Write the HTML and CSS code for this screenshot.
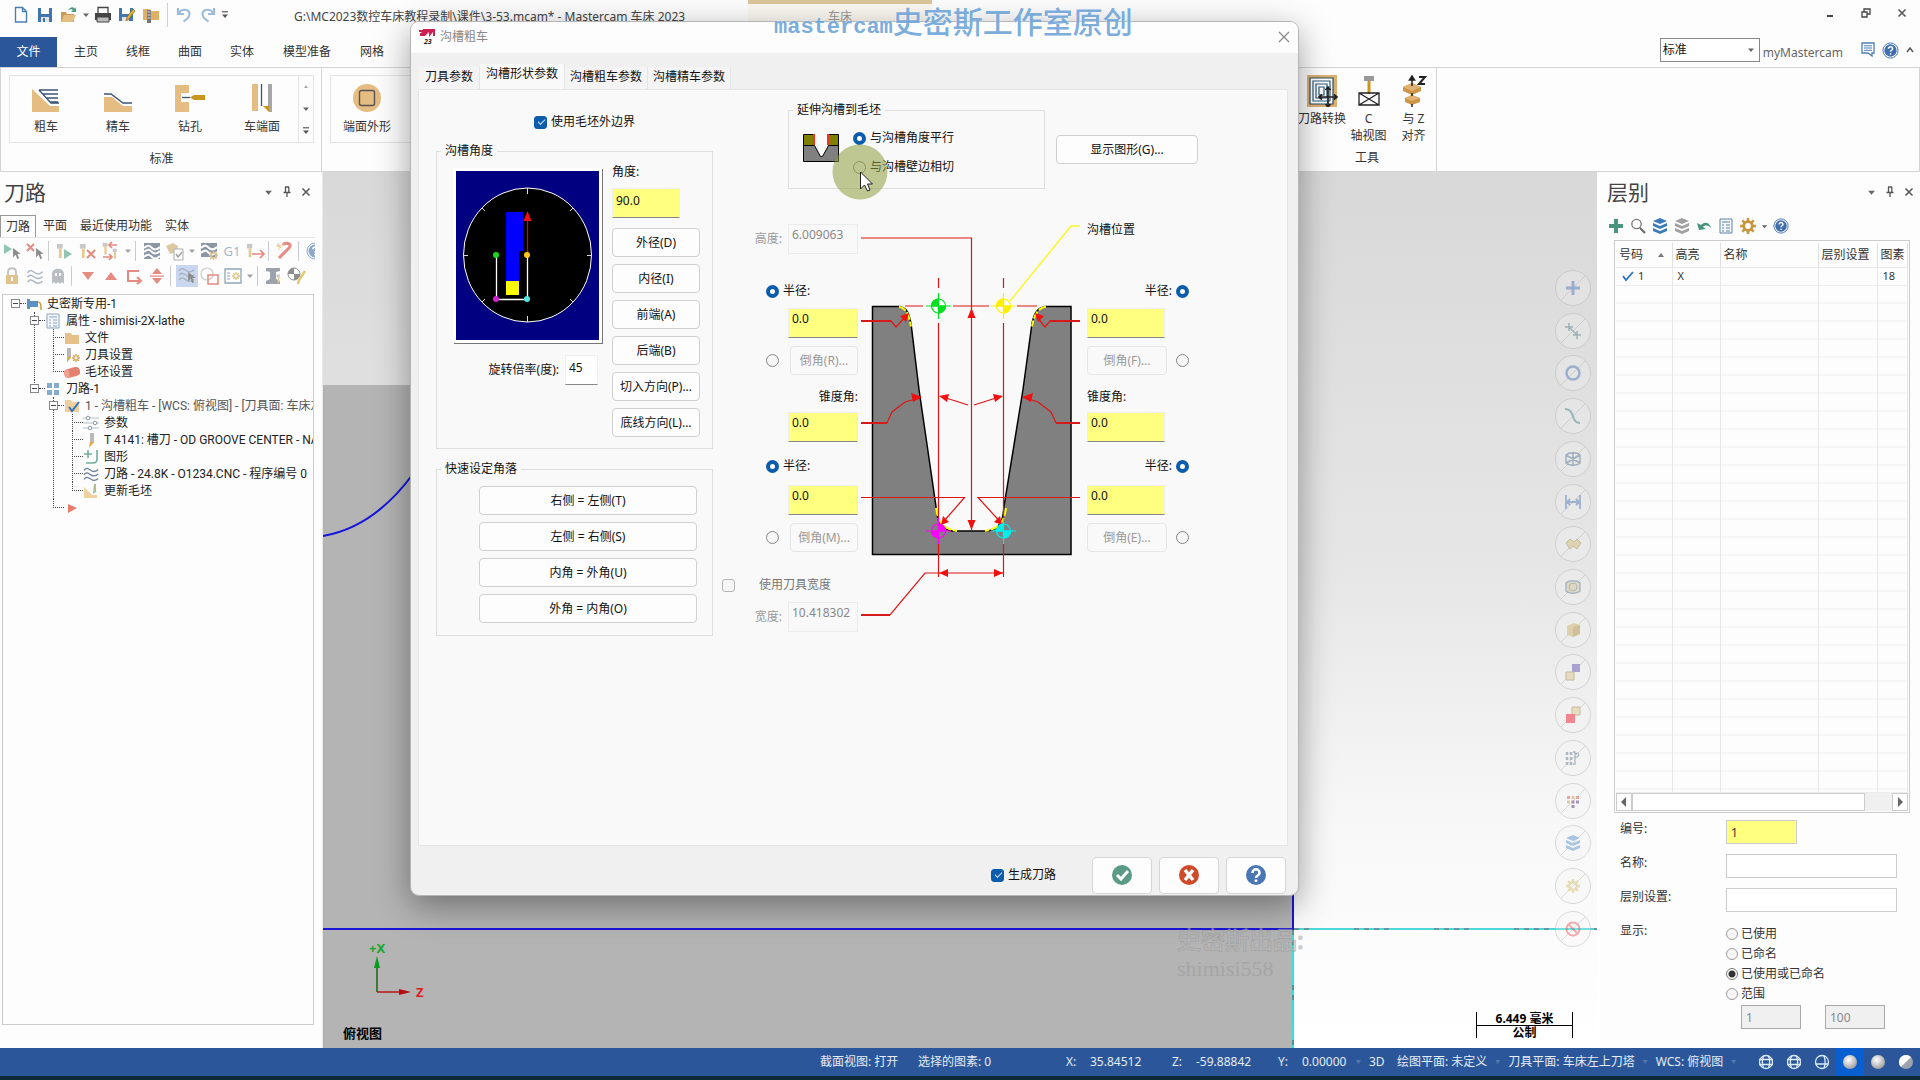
FILE: index.html
```html
<!DOCTYPE html>
<html lang="zh-CN">
<head>
<meta charset="utf-8">
<title>Mastercam 车床 2023</title>
<link rel="stylesheet" href="styles.css">
</head>
<body>
<svg class="defs" aria-hidden="true">
  <symbol id="help" viewBox="0 0 18 18"><circle cx="9" cy="9" r="8" fill="#fff" stroke="#3f6fae" stroke-width="1"/><circle cx="9" cy="9" r="6.500" fill="#3f6fae"/><path d="M6.800 7.200c0-3 4.600-2.800 4.400 0 0 1.500-2.200 1.600-2.200 3.200M9 12v1.600" fill="none" stroke="#fff" stroke-width="1.600"/></symbol>
  <symbol id="layers" viewBox="0 0 16 16"><path d="M8 0l7 3-7 3-7-3zM1 5l7 3 7-3v3l-7 3-7-3zM1 10l7 3 7-3v3l-7 3-7-3z" fill="currentColor"/></symbol>
  <symbol id="gear" viewBox="0 0 16 16"><circle cx="8" cy="8" r="4.300" fill="none" stroke="currentColor" stroke-width="2.800"/><path d="M8 0v3M8 13v3M0 8h3M13 8h3M2.300 2.300l2 2M11.700 11.700l2 2M13.700 2.300l-2 2M4.300 11.700l-2 2" stroke="currentColor" stroke-width="2.600"/></symbol>
  <symbol id="caret" viewBox="0 0 8 8"><path d="M1 2.500h6L4 6z" fill="#666"/></symbol>
  <symbol id="more" viewBox="0 0 8 8"><path d="M1 .8h6" stroke="#555" stroke-width="1.200"/><path d="M1 3.500h6L4 7z" fill="#555"/></symbol>
  <symbol id="pin" viewBox="0 0 10 12"><path d="M3 1h4M3.500 1v5M6.800 1v5M1.500 6.500h7M5 7v4" stroke="#555" stroke-width="1.300" fill="none"/></symbol>
  <symbol id="cross" viewBox="0 0 10 10"><path d="M1.500 1.500l7 7M8.500 1.500l-7 7" stroke="#555" stroke-width="1.500"/></symbol>
  <symbol id="waves" viewBox="0 0 18 16"><path d="M1 4c3-4 5-2 8 0s5 2 8-1M1 9c3-4 5-2 8 0s5 2 8-1M1 14c3-4 5-2 8 0s5 2 8-1" fill="none" stroke="currentColor" stroke-width="1.400"/></symbol>
  <symbol id="tool" viewBox="0 0 18 18"><path d="M1 1h6v5H1z" fill="#a5a5a5"/><path d="M3 6h3v10H3z" fill="#d9ad4c"/></symbol>
  <symbol id="arrowptr" viewBox="0 0 10 14"><path d="M1 0v11l3-3 2 5 2-1-2-5h4z" fill="#444"/></symbol>
  <symbol id="globe" viewBox="0 0 16 16"><g fill="none" stroke="#dcebfb" stroke-width="1.300"><circle cx="8" cy="8" r="6.500"/><path d="M1 5.500h14M1 10.500h14M5.500 2c-1.500 4-1.500 8 0 12M10.500 2c1.500 4 1.500 8 0 12"/></g></symbol>
  <radialGradient id="ball" cx=".4" cy=".35" r=".7"><stop offset="0" stop-color="#fff"/><stop offset="1" stop-color="#9b9b9b"/></radialGradient>
</svg>

<header class="titlebar">
  <div class="quick">
    <button class="ib" title="新建"><svg width="16" height="18" viewBox="0 0 16 18"><path d="M2.500 1.500h7l4 4v10.500h-11zM9.500 1.500v4h4" fill="#fff" stroke="#4a7fb5" stroke-width="1.400"/></svg></button>
    <button class="ib" title="保存"><svg width="16" height="16" viewBox="0 0 16 16"><path d="M1 1h14v14H1z" fill="#3f76b0"/><path d="M4 1h8v6H4z" fill="#fff"/><path d="M4 10h8v5H4z" fill="#e4e4e4"/><path d="M6 11h2v4H6z" fill="#3f76b0"/></svg></button>
    <button class="ib" title="打开"><svg width="18" height="18" viewBox="0 0 18 18"><path d="M1 6h5l1 2h7v8H1z" fill="#c99a55"/><path d="M1 16l3-7h12l-3 7z" fill="#e6bd80"/><path d="M8 4c3-4 6-3 7-1l1-2v5h-5l2-2c-1-1-3-1-5 0z" fill="#4b9b80"/></svg></button>
    <svg class="caret" width="8" height="8"><use href="#caret"/></svg>
    <button class="ib" title="打印"><svg width="18" height="18" viewBox="0 0 18 18"><path d="M4 1.500h10V8H4z" fill="#fff" stroke="#444" stroke-width="1.300"/><path d="M1 7h16v7H1z" fill="#444"/><path d="M3 11h12v5H3z" fill="#bbb" stroke="#444"/></svg></button>
    <button class="ib" title="另存为"><svg width="18" height="18" viewBox="0 0 18 18"><path d="M1 2h14v13H1z" fill="#3f76b0"/><path d="M4 2h8v6H4z" fill="#fff"/><path d="M4 11h7v4H4z" fill="#e4e4e4"/><path d="M8 15l1-4 6-8 2 2-6 8z" fill="#e2b031" stroke="#705a20" stroke-width=".6"/></svg></button>
    <button class="ib" title="打包"><svg width="18" height="18" viewBox="0 0 18 18"><path d="M1 3h6l2 2h8v9H1z" fill="#e0b069"/><path d="M5 4h4v13H5z" fill="#777"/><path d="M5.500 6h3M5.500 9h3M5.500 12h3" stroke="#ddd"/></svg></button>
    <span class="vsep"></span>
    <button class="ib" title="撤销"><svg width="16" height="16" viewBox="0 0 16 16"><path d="M2 1v6h6M2.500 6.500c3-5 10-5 11 0 .5 4-3 6-6 8" fill="none" stroke="#9dbbdc" stroke-width="2.200"/></svg></button>
    <button class="ib" title="重做"><svg width="16" height="16" viewBox="0 0 16 16"><path d="M14 1v6H8M13.500 6.500c-3-5-10-5-11 0-.5 4 3 6 6 8" fill="none" stroke="#9dbbdc" stroke-width="2.200"/></svg></button>
    <svg class="caret" width="8" height="8"><use href="#more"/></svg>
  </div>
  <span class="doc">G:\MC2023数控车床教程录制\课件\3-53.mcam* - Mastercam 车床 2023</span>
  <span class="context">车床</span>
  <div class="wincontrols">
    <button title="最小化"><svg width="12" height="12" viewBox="0 0 12 12"><path d="M3 9h6" stroke="#444" stroke-width="2"/></svg></button>
    <button title="还原"><svg width="10" height="10" viewBox="0 0 10 10"><path d="M1 4h5v5H1zM3 4V1h6v5H6" fill="none" stroke="#444" stroke-width="1.300"/></svg></button>
    <button title="关闭"><svg width="10" height="10"><use href="#cross"/></svg></button>
  </div>
</header>

<nav class="menubar">
  <a class="file" href="#">文件</a><a href="#">主页</a><a href="#">线框</a><a href="#">曲面</a><a href="#">实体</a><a class="wide" href="#">模型准备</a><a href="#">网格</a>
  <div class="menuright">
    <span class="combo"><select aria-label="配置"><option>标准</option></select><svg width="8" height="8"><use href="#caret"/></svg></span>
    <a class="my" href="#">myMastercam</a>
    <svg width="14" height="16" viewBox="0 0 14 16"><path d="M1 1h12v10h-2v3l-4-3H1z" fill="#fff" stroke="#4a7fb5" stroke-width="1.300"/><path d="M3 3.800h8M3 6h8M3 8.300h8" stroke="#4a7fb5"/></svg>
    <svg width="17" height="17"><use href="#help"/></svg>
    <svg width="8" height="8" viewBox="0 0 8 8"><path d="M1 6l3-4 3 4" fill="none" stroke="#555" stroke-width="1.500"/></svg>
  </div>
</nav>

<section class="ribbon">
  <div class="rgroup">
    <div class="gallery">
      <button class="big"><svg width="30" height="30" viewBox="0 0 30 30"><path d="M1 6l18 17h9v6H1z" fill="#e5bd82"/><path d="M8 7h19M12 11h15M16 15h11M19 19h8M8 7l12 13h8" stroke="#3d5475" stroke-width="1.300" fill="none"/></svg>粗车</button>
      <button class="big"><svg width="30" height="30" viewBox="0 0 30 30"><path d="M1 14h8l11 9h9v6H1z" fill="#e5bd82"/><path d="M1 11h7l12 9h9" stroke="#3d5475" stroke-width="1.300" fill="none"/></svg>精车</button>
      <button class="big"><svg width="32" height="30" viewBox="0 0 32 30"><path d="M1 2h14v8H7v9h8v10H1z" fill="#e5bd82"/><path d="M8 14.500h8" stroke="#3d5475" stroke-width="1.300"/><path d="M16 14.500l4-2.500h11v5H20z" fill="#c8961e"/></svg>钻孔</button>
      <button class="big"><svg width="24" height="30" viewBox="0 0 24 30"><path d="M2 1h6v27H2z" fill="#e5bd82"/><path d="M11.500 1v22" stroke="#3d5475" stroke-width="1.300"/><path d="M18 1h4v28h-3l-1-4z" fill="#a7a7a7"/><path d="M13 23h6v6z" fill="#c8961e"/></svg>车端面</button>
      <div class="gscroll"><svg width="8" height="8" viewBox="0 0 8 8"><path d="M2 5h4L4 2z" fill="#aaa"/></svg><svg width="8" height="8"><use href="#caret"/></svg><svg width="8" height="8"><use href="#more"/></svg></div>
    </div>
    <span class="rname">标准</span>
  </div>
  <div class="rgroup crowd">
    <div class="gallery">
      <button class="big"><svg width="30" height="30" viewBox="0 0 30 30"><circle cx="15" cy="15" r="14" fill="#e5bd82"/><rect x="7.500" y="7.500" width="15" height="15" rx="2" fill="none" stroke="#555" stroke-width="1.400"/></svg>端面外形</button>
    </div>
  </div>
  <div class="rgroup tools">
    <div class="toolrow">
      <button class="big"><svg width="32" height="32" viewBox="0 0 32 32"><path d="M1 0h30v32H1z" fill="#dcb06f"/><path d="M4 3h23v26H4z" fill="#fff" stroke="#2c4a66" stroke-width="1.200"/><path d="M7 6h17v20H7zM10 9h11v14H10zM13 12h5v8h-5z" fill="none" stroke="#2c5a78" stroke-width="1.200"/><path d="M22 12v20M13 22h18M19.500 15l2.500-3 2.500 3M19.500 29l2.500 3 2.500-3M16 19.500L13 22l3 2.500M28 19.500l3 2.500-3 2.500" stroke="#222" stroke-width="1.700" fill="none"/></svg>刀路转换</button>
      <button class="big"><svg width="24" height="32" viewBox="0 0 24 32"><path d="M7 1h10v5H7z" fill="#999"/><path d="M10.500 6h3v13h-3z" fill="#c8961e"/><path d="M2 18h20v12H2zM2 18l20 12M22 18L2 30" fill="none" stroke="#222" stroke-width="1.300"/></svg>C<br>轴视图</button>
      <button class="big"><svg width="26" height="32" viewBox="0 0 26 32"><path d="M2 12l9-4 9 4v4l-9 4-9-4zM4 23l7-3 8 3v4l-8 3-7-3z" fill="#cf9546"/><path d="M2 12l9-4 9 4-9 4zM4 23l7-3 8 3-8 3z" fill="#e0b374"/><path d="M11 2v9M11 18v3M11 29v3M8.500 5L11 1l2.500 4z" stroke="#222" stroke-width="1.500"/><path d="M18 2h6l-6 7h6" fill="none" stroke="#222" stroke-width="2"/></svg>与 Z<br>对齐</button>
    </div>
    <span class="rname">工具</span>
  </div>
</section>

<main class="workspace">
  <aside class="paths">
    <div class="phead"><h2>刀路</h2><span class="pbtns"><svg width="9" height="9"><use href="#caret"/></svg><svg width="10" height="12"><use href="#pin"/></svg><svg width="10" height="10"><use href="#cross"/></svg></span></div>
    <nav class="ptabs"><a class="on" href="#">刀路</a><a href="#">平面</a><a href="#">最近使用功能</a><a href="#">实体</a></nav>
    <div class="tbar">
      <svg class="ti" viewBox="0 0 22 22"><path d="M3 4l8 5-8 5z" fill="#4c9f84"/><use href="#arrowptr" x="11" y="8" width="9" height="12"/></svg>
      <svg class="ti" viewBox="0 0 22 22"><path d="M3 4l7 7M10 4l-7 7" stroke="#d6402f" stroke-width="2"/><use href="#arrowptr" x="11" y="8" width="9" height="12"/></svg>
      <i class="ts"></i>
      <svg class="ti" viewBox="0 0 22 22"><use href="#tool" x="2" y="3" width="17" height="17"/><path d="M10 9l8 5-8 5z" fill="#4c9f84"/></svg>
      <svg class="ti" viewBox="0 0 22 22"><use href="#tool" x="2" y="3" width="17" height="17"/><path d="M10 10l8 8M18 10l-8 8" stroke="#d6402f" stroke-width="2"/></svg>
      <svg class="ti" viewBox="0 0 22 22"><use href="#tool" x="2" y="2" width="14" height="14"/><use href="#tool" x="12" y="8" width="12" height="12"/><path d="M9 5h8M12 2L9 5l3 3M3 17h9M9 14l3 3-3 3" stroke="#d6402f" stroke-width="1.700" fill="none"/></svg>
      <svg class="tc" viewBox="0 0 8 8"><use href="#caret"/></svg>
      <i class="ts"></i>
      <svg class="ti" viewBox="0 0 22 22"><path d="M3 3h16v16H3z" fill="#40556f"/><path d="M3 8c4-4 6-2 8 0s5 2 8-1M3 12c4-4 6-2 8 0s5 2 8-1M3 17c4-4 6-2 8 0s5 2 8-1" stroke="#fff" stroke-width="2" fill="none"/></svg>
      <svg class="ti" viewBox="0 0 22 22"><path d="M2 6l7-3 5 3-1 6-7 2z" fill="#c9a763"/><path d="M10 9h9v11h-9z" fill="#fff" stroke="#777"/><path d="M12 14l2 3 4-5" stroke="#666" fill="none" stroke-width="1.500"/></svg>
      <svg class="tc" viewBox="0 0 8 8"><use href="#caret"/></svg>
      <svg class="ti" viewBox="0 0 22 22"><path d="M3 3h16v14H3z" fill="#40556f"/><path d="M3 8c4-4 6-2 8 0s5 2 8-1M3 13c4-4 6-2 8 0s5 2 8-1" stroke="#fff" stroke-width="2.200" fill="none"/><g color="#d09b42"><use href="#gear" x="11" y="11" width="9" height="9"/></g></svg>
      <span class="ti g1">G1</span>
      <svg class="ti" viewBox="0 0 22 22"><use href="#tool" x="2" y="3" width="16" height="16"/><path d="M8 14h11M16 10l4 4-4 4" stroke="#d6402f" stroke-width="1.700" fill="none"/></svg>
      <i class="ts"></i>
      <svg class="ti" viewBox="0 0 22 22"><path d="M5 18L15 8c4-5-4-6-6-3" stroke="#d6402f" stroke-width="3" fill="none"/><path d="M5 3v7M2 6h7M3 4l4 4" stroke="#d9ad4c"/></svg>
      <i class="ts"></i>
      <svg class="ti" viewBox="0 0 22 22"><use href="#help" x="2" y="2" width="18" height="18"/></svg>
    </div>
    <div class="tbar">
      <svg class="ti" viewBox="0 0 22 22"><path d="M7 10V7c0-5 8-5 8 0v3" fill="none" stroke="#999" stroke-width="1.800"/><path d="M5 10h12v9H5z" fill="#d09b42"/><path d="M11 12v4" stroke="#fff" stroke-width="2"/></svg>
      <svg class="ti slate" viewBox="0 0 22 22"><use href="#waves" x="2" y="4" width="18" height="15"/></svg>
      <svg class="ti" viewBox="0 0 22 22"><path d="M5 19V9c0-7 12-7 12 0v10l-2-2-2 2-2-2-2 2-2-2z" fill="#8f949c"/><path d="M8 8h2v3H8zM12 8h2v3h-2z" fill="#fff"/></svg>
      <i class="ts"></i>
      <svg class="ti" viewBox="0 0 22 22"><path d="M5 7h12l-6 8z" fill="#d6402f"/></svg>
      <svg class="ti" viewBox="0 0 22 22"><path d="M5 15h12l-6-8z" fill="#d6402f"/></svg>
      <svg class="ti" viewBox="0 0 22 22"><path d="M16 6H5v10h13M14 12l4 4-4 3" fill="none" stroke="#d6402f" stroke-width="2"/></svg>
      <svg class="ti" viewBox="0 0 22 22"><path d="M6 9h10l-5-6zM6 13h10l-5 6zM4 10.500h14v1.200H4z" fill="#d6402f"/></svg>
      <i class="ts"></i>
      <svg class="ti lit slate" viewBox="0 0 22 22"><use href="#waves" x="2" y="2" width="17" height="15"/><use href="#arrowptr" x="11" y="7" width="9" height="12"/></svg>
      <svg class="ti" viewBox="0 0 22 22"><circle cx="8" cy="9" r="6" fill="none" stroke="#aaa" stroke-width="1.200"/><path d="M9 10h10v9H9z" fill="none" stroke="#d6402f" stroke-width="1.500"/></svg>
      <svg class="ti" viewBox="0 0 22 22"><path d="M3 4h16v14H3z" fill="#fff" stroke="#4e6c8e" stroke-width="1.300"/><path d="M5 8h3M5 11h3M5 14h3" stroke="#4e6c8e"/><g color="#c9a33c"><use href="#gear" x="10" y="7" width="8" height="8"/></g></svg>
      <svg class="tc" viewBox="0 0 8 8"><use href="#caret"/></svg>
      <i class="ts"></i>
      <svg class="ti" viewBox="0 0 22 22"><path d="M3 3h14v3l-4 1v7l4 2v3H3v-3l4-2V7L3 6z" fill="#5d6978"/><use href="#tool" x="13" y="8" width="10" height="12"/></svg>
      <svg class="ti" viewBox="0 0 22 22"><circle cx="8" cy="9" r="6" fill="#fff" stroke="#444"/><path d="M8 3v6H2c0-3 3-6 6-6zM8 9h6c0 3-3 6-6 6z" fill="#444"/><path d="M12 19l1-4 6-9" stroke="#d0a623" stroke-width="2.500" fill="none"/></svg>
    </div>
    <div class="treebox">
      <ul class="tree">
        <li><div class="node"><b></b><s></s><svg viewBox="0 0 16 16"><path d="M1 3h3v10H1zM4 5h8v6H4z" fill="#5b91c4"/><path d="M12 6c3 0 3 3 3 8" stroke="#c9a33c" stroke-width="1.500" fill="none"/></svg>史密斯专用-1</div>
          <ul>
            <li><div class="node"><b></b><s></s><svg viewBox="0 0 16 16"><path d="M2 1h12v14H2z" fill="#f2f6fa" stroke="#8da3ba"/><path d="M4 4h8M4 7h2M8 7h4M4 10h2M8 10h4M4 13h2M8 13h4" stroke="#8da3ba"/></svg>属性 - shimisi-2X-lathe</div>
              <ul>
                <li><div class="node leaf"><s></s><svg viewBox="0 0 16 16"><path d="M1 3h6l1 2h7v9H1z" fill="#e6c08a"/></svg>文件</div></li>
                <li><div class="node leaf"><s></s><svg viewBox="0 0 16 16"><path d="M3 1h4v10l-4 4z" fill="#b7b7b7"/><path d="M3 10h4l-4 5z" fill="#d9b13c"/><g color="#d6a95c"><use href="#gear" x="8" y="7" width="8" height="8"/></g></svg>刀具设置</div></li>
                <li><div class="node leaf"><s></s><svg viewBox="0 0 16 16"><rect x="0" y="4" width="16" height="9" rx="4" fill="#e4826f" transform="rotate(-15 8 8)"/><ellipse cx="3" cy="10" rx="2.500" ry="4" fill="#efa493"/></svg>毛坯设置</div></li>
              </ul>
            </li>
            <li><div class="node"><b></b><s></s><svg viewBox="0 0 16 16"><path d="M2 2h5v5H2zM9 2h5v5H9zM2 9h5v5H2zM9 9h5v5H9z" fill="#85abd2"/></svg>刀路-1</div>
              <ul>
                <li><div class="node dim"><b></b><s></s><svg viewBox="0 0 16 16"><path d="M1 2h6l1 2h7v10H1z" fill="#f0cf9f"/><path d="M5 9l3 4 7-9" stroke="#2f74c0" stroke-width="2" fill="none"/></svg>1 - 沟槽粗车 - [WCS: 俯视图] - [刀具面: 车床左上刀塔]</div>
                  <ul>
                    <li><div class="node leaf"><s></s><svg viewBox="0 0 16 16"><path d="M0 3h16M0 8h16M0 13h16" stroke="#b4bfc7"/><circle cx="5" cy="3" r="1.800" fill="#fff" stroke="#8a99a5"/><circle cx="12" cy="8" r="1.800" fill="#fff" stroke="#8a99a5"/><circle cx="7" cy="13" r="1.800" fill="#fff" stroke="#8a99a5"/></svg>参数</div></li>
                    <li><div class="node leaf"><s></s><svg viewBox="0 0 16 16"><path d="M7 1h4v10H7z" fill="#b9b9b9"/><path d="M7 10h4l-5 6z" fill="#e0a839"/></svg>T 4141: 槽刀 - OD GROOVE CENTER - NARROW</div></li>
                    <li><div class="node leaf"><s></s><svg viewBox="0 0 16 16"><path d="M5 1v8M1 5h8M14 1v9c0 3-2 4-4 4H3" stroke="#71b09d" stroke-width="1.600" fill="none"/></svg>图形</div></li>
                    <li><div class="node leaf slate"><s></s><svg viewBox="0 0 16 16"><use href="#waves" width="16" height="16"/></svg><span>刀路 - 24.8K - O1234.CNC - 程序编号 0</span></div></li>
                    <li><div class="node leaf"><s></s><svg viewBox="0 0 16 16"><path d="M1 4l8 8h5v3H1z" fill="#efd09f"/><path d="M11 1h2v8l-3 2z" fill="#a9bf9a"/></svg>更新毛坯</div></li>
                  </ul>
                </li>
                <li><div class="node leaf"><s></s><svg viewBox="0 0 16 16"><path d="M4 4l9 4-9 5z" fill="#e87b6c"/></svg></div></li>
              </ul>
            </li>
          </ul>
        </li>
      </ul>
    </div>
  </aside>

  <section class="viewport">
    <svg class="scene" width="100%" height="100%">
      <rect x="0" y="213" width="970" height="663" fill="#b4b4b4"/>
      <path d="M0 364C35 358 65 336 90 302" fill="none" stroke="#1414dc" stroke-width="2"/>
      <path d="M0 757H970V700" fill="none" stroke="#1a14d8" stroke-width="2"/>
      <line x1="971" y1="757" x2="100%" y2="757" stroke="#4bd8d8" stroke-width="2"/>
      <line x1="971" y1="757" x2="100%" y2="757" stroke="#7a5a6a" stroke-width="1" stroke-dasharray="5 5 5 45 5 5 5 5"/>
      <path d="M970 758v118" stroke="#36dede" stroke-width="2"/>
      <path d="M970 758v118" stroke="#555" stroke-dasharray="5 5 5 40"/>
      <path d="M54 820V790" stroke="#146414" stroke-width="1.500"/><path d="M51 796l3-12 3 12z" fill="#0a9a1e"/>
      <path d="M54 820h24" stroke="#b41414" stroke-width="1.500"/><path d="M76 817l12 3-12 3z" fill="#b00d0d"/>
      <text x="46" y="781" class="axis" fill="#18a52a">+X</text>
      <text x="93" y="825" class="axis" fill="#e01c24">Z</text>
      <text x="20" y="866" class="viewname">俯视图</text>
      <text x="854" y="777" class="mark cn">史密斯出品:</text>
      <text x="854" y="804" class="mark en">shimisi558</text>
    </svg>
    <div class="scale"><span>6.449 毫米</span><span>公制</span></div>
    <div class="masks">
      <button><svg viewBox="0 0 36 36"><path d="M18 11v14M11 18h14" stroke="#5a7fc0" stroke-width="3"/></svg></button>
      <button><svg viewBox="0 0 36 36"><path d="M14 14l8 8M14 10v8M10 14h8M22 18v8M18 22h8" stroke="#5f8794" stroke-width="1.500"/></svg></button>
      <button><svg viewBox="0 0 36 36"><circle cx="18" cy="18" r="6.500" fill="none" stroke="#5a7fc0" stroke-width="2.500"/></svg></button>
      <button><svg viewBox="0 0 36 36"><path d="M10 11c11 0 5 14 15 14" fill="none" stroke="#4f8494" stroke-width="2"/></svg></button>
      <button><svg viewBox="0 0 36 36"><path d="M11 14c3-3 11-3 14 0v8c-3 3-11 3-14 0zM11 14l14 8M25 14l-14 8M18 12v12" fill="none" stroke="#5f7d9c" stroke-width="1.500"/></svg></button>
      <button><svg viewBox="0 0 36 36"><path d="M11 11v14M25 11v14M12 18h12M15 15l-3 3 3 3M21 15l3 3-3 3" fill="none" stroke="#5a7fc0" stroke-width="1.800"/></svg></button>
      <button><svg viewBox="0 0 36 36"><path d="M11 17l4-4 4 3 3-3 4 4-4 6-4-3-3 3z" fill="#d9c27c" stroke="#a68f55"/></svg></button>
      <button><svg viewBox="0 0 36 36"><path d="M11 14c3-3 11-3 14 0v8c-3 3-11 3-14 0z" fill="#d8cc98" stroke="#7086a0" stroke-width="1.500"/><circle cx="18" cy="18" r="4" fill="none" stroke="#7086a0"/></svg></button>
      <button><svg viewBox="0 0 36 36"><path d="M12 14l7-3 6 2v9l-7 3-6-2z" fill="#d3b76b"/><path d="M18 15l7-2v9l-7 3z" fill="#b5964e"/></svg></button>
      <button><svg viewBox="0 0 36 36"><path d="M17 10h8v8h-8z" fill="#6b56b4"/><path d="M11 18h8v8h-8z" fill="#e4c891" stroke="#9a865a"/></svg></button>
      <button><svg viewBox="0 0 36 36"><path d="M17 10h8v8h-8z" fill="#e4c891" stroke="#9a865a"/><path d="M11 17h9v9h-9z" fill="#f01f30"/></svg></button>
      <button><svg viewBox="0 0 36 36"><path d="M12 12v13M16 12v13" stroke="#6a7e94" stroke-width="2.500" stroke-dasharray="3 2"/><path d="M18 12h2v12h-2M20 14c5-3 5 4 0 3" fill="none" stroke="#6a7e94" stroke-width="1.300"/></svg></button>
      <button><svg viewBox="0 0 36 36"><path d="M12 13h3v3h-3zM21 13h3v3h-3z" fill="#d55"/><path d="M16.500 13h3v3h-3zM12 17.500h3v3h-3z" fill="#c9a33c"/><path d="M16.500 17.500h3v3h-3zM21 17.500h3v3h-3zM16.500 22h3v3h-3z" fill="#537"/></svg></button>
      <button><svg viewBox="0 0 36 36" color="#5a92cc"><use href="#layers" x="10" y="10" width="16" height="16"/></svg></button>
      <button><svg viewBox="0 0 36 36" color="#d4bd6a"><use href="#gear" x="11" y="11" width="14" height="14"/></svg></button>
      <button><svg viewBox="0 0 36 36"><circle cx="18" cy="18" r="6.500" fill="none" stroke="#e86060" stroke-width="2"/><path d="M13 13l10 10" stroke="#e86060" stroke-width="2"/></svg></button>
    </div>
  </section>

  <aside class="levels">
    <div class="phead"><h2>层别</h2><span class="pbtns"><svg width="9" height="9"><use href="#caret"/></svg><svg width="10" height="12"><use href="#pin"/></svg><svg width="10" height="10"><use href="#cross"/></svg></span></div>
    <div class="ltools">
      <svg viewBox="0 0 16 16"><path d="M8 1v14M1 8h14" stroke="#4a9480" stroke-width="4"/></svg>
      <svg viewBox="0 0 16 16"><circle cx="6.500" cy="6" r="4.700" fill="none" stroke="#777" stroke-width="1.300"/><path d="M10 10l5 5" stroke="#666" stroke-width="2"/></svg>
      <svg viewBox="0 0 16 16" color="#3b7bb8"><use href="#layers"/></svg>
      <svg viewBox="0 0 16 16" color="#a0a0a0"><use href="#layers"/></svg>
      <svg viewBox="0 0 16 16"><path d="M1 5l2 7 7-1-3-2c2-2 5-2 8 1-1-5-6-7-10-3z" fill="#4a9480"/></svg>
      <svg viewBox="0 0 16 16"><path d="M2 1h12v14H2z" fill="#f4f8fb" stroke="#5d82a6"/><path d="M4 4h8M4 7h2M8 7h4M4 10h2M8 10h4M4 13h2M8 13h4" stroke="#5d82a6"/></svg>
      <svg viewBox="0 0 16 16" color="#c8963f"><use href="#gear"/></svg>
      <svg class="tiny" viewBox="0 0 8 8"><use href="#caret"/></svg>
      <svg viewBox="0 0 16 16"><use href="#help" width="16" height="16"/></svg>
    </div>
    <div class="lgrid">
      <table>
        <colgroup><col class="c1"><col class="c2"><col class="c3"><col class="c4"><col></colgroup>
        <thead><tr><th>号码<svg width="8" height="8" viewBox="0 0 8 8"><path d="M1 6h6L4 2z" fill="#777"/></svg></th><th>高亮</th><th>名称</th><th>层别设置</th><th>图素</th></tr></thead>
        <tbody>
          <tr><td><svg width="12" height="12" viewBox="0 0 12 12"><path d="M1 6l3 4 7-8" fill="none" stroke="#2f74c0" stroke-width="1.800"/></svg>1</td><td>X</td><td></td><td></td><td class="num">18</td></tr>
          <tr class="blank"><td></td><td></td><td></td><td></td><td></td></tr>
        </tbody>
      </table>
      <div class="hscroll"><button aria-label="左"><svg width="8" height="10" viewBox="0 0 8 10"><path d="M6 0v10L1 5z" fill="#666"/></svg></button><span class="thumb"></span><button aria-label="右"><svg width="8" height="10" viewBox="0 0 8 10"><path d="M2 0v10l5-5z" fill="#666"/></svg></button></div>
    </div>
    <form class="lform">
      <label for="no">编号:</label><input class="num" id="no" value="1">
      <label for="nm">名称:</label><input id="nm">
      <label for="ls">层别设置:</label><input id="ls">
      <span>显示:</span>
      <div class="opts">
        <label><input type="radio" name="show">已使用</label>
        <label><input type="radio" name="show">已命名</label>
        <label><input type="radio" name="show" checked>已使用或已命名</label>
        <label><input type="radio" name="show">范围</label>
        <div class="range"><input aria-label="从" value="1" disabled><input aria-label="到" value="100" disabled></div>
      </div>
    </form>
  </aside>
</main>

<footer class="status">
  <span class="s1">截面视图: 打开</span><span class="s2">选择的图素: 0</span>
  <span class="s3">X:</span><span class="s4">35.84512</span><span class="s3">Z:</span><span class="s4">-59.88842</span><span class="s3">Y:</span><span class="s5">0.00000</span><i></i>
  <span class="s6">3D</span><span>绘图平面: 未定义</span><i></i><span>刀具平面: 车床左上刀塔</span><i></i><span>WCS: 俯视图</span><i></i>
  <div class="shade">
    <button title="线框"><svg viewBox="0 0 16 16"><use href="#globe"/></svg></button>
    <button title="隐藏线"><svg viewBox="0 0 16 16"><use href="#globe"/></svg></button>
    <button title="消隐"><svg viewBox="0 0 16 16"><circle cx="8" cy="8" r="6.500" fill="none" stroke="#dcebfb" stroke-width="1.300"/><path d="M2 10h12M10 2c1.500 4 1.500 8 0 12" fill="none" stroke="#dcebfb" stroke-width="1.300"/></svg></button>
    <button class="on" title="着色"><svg viewBox="0 0 16 16"><circle cx="8" cy="8" r="7" fill="url(#ball)"/></svg></button>
    <button title="边框着色"><svg viewBox="0 0 16 16"><circle cx="8" cy="8" r="7" fill="url(#ball)"/></svg></button>
    <button title="半透明"><svg viewBox="0 0 16 16"><circle cx="8" cy="8" r="7" fill="#9aa3ae"/><path d="M3 13A7 7 0 0 1 13 3z" fill="#fff"/></svg></button>
  </div>
</footer>

<section class="dialog" role="dialog" aria-label="沟槽粗车">
  <header><svg width="18" height="18" viewBox="0 0 18 18"><path d="M1 8c0-3 1-4 3-4V1h12v7h-2V4l-4 5V4L6 8z" fill="#cf1f52"/><path d="M0 3h6M1 6h5" stroke="#cf1f52" stroke-width="2"/><text x="5" y="16" class="v23">23</text></svg><span>沟槽粗车</span><button title="关闭"><svg width="14" height="14" viewBox="0 0 14 14"><path d="M2 2l10 10M12 2L2 12" stroke="#888" stroke-width="1.200"/></svg></button></header>
  <nav class="dtabs"><a href="#">刀具参数</a><a class="on" href="#">沟槽形状参数</a><a href="#">沟槽粗车参数</a><a href="#">沟槽精车参数</a></nav>
  <div class="dbody">
    <div class="left">
      <label class="ck outer"><input type="checkbox" checked>使用毛坯外边界</label>
      <fieldset class="angle">
        <legend>沟槽角度</legend>
        <div class="dialcol">
          <svg class="dial" width="143" height="169" viewBox="456 174 143 169">
            <rect x="456" y="174" width="143" height="169" fill="#000080"/>
            <ellipse cx="527.500" cy="258" rx="64" ry="67" fill="#000" stroke="#fff"/>
            <path d="M527.500 191v6M527.500 325v-6M463 258.500h5M592 258.500h-5M482 211l3 3M573 211l-3 3M482 305l3-3M573 305l-3-3" stroke="#ddd"/>
            <path d="M506 215h17v39h-4v30h-13z" fill="#0000ff"/><path d="M506 284h13v14h-13z" fill="#ff0"/>
            <path d="M496.500 258v44.500h31V258" fill="none" stroke="#fff" stroke-width="1.300"/>
            <path d="M527.500 258v-36" stroke="#e00000" stroke-width="1.300"/><path d="M523.500 224l4-10 4 10z" fill="#f01010"/>
            <circle cx="496" cy="258" r="3" fill="#1fd61f"/><circle cx="527" cy="258" r="3" fill="#ffc61a"/><circle cx="496" cy="302" r="3" fill="#d21fd2"/><circle cx="527" cy="302" r="3" fill="#4fe6e6"/>
          </svg>
          <label class="rot">旋转倍率(度): <input value="45"></label>
        </div>
        <div class="btncol">
          <label for="ang">角度:</label><input id="ang" class="yel" value="90.0">
          <button>外径(D)</button><button>内径(I)</button><button>前端(A)</button><button>后端(B)</button><button>切入方向(P)...</button><button>底线方向(L)...</button>
        </div>
      </fieldset>
      <fieldset class="corner">
        <legend>快速设定角落</legend>
        <button>右侧 = 左侧(T)</button><button>左侧 = 右侧(S)</button><button>内角 = 外角(U)</button><button>外角 = 内角(O)</button>
      </fieldset>
    </div>
    <div class="right">
      <div class="toprow">
        <fieldset class="extend">
          <legend>延伸沟槽到毛坯</legend>
          <svg width="36" height="28" viewBox="0 0 36 28"><path d="M.5.500h10v11H.5zM25.500.500h10v11h-10z" fill="#808000" stroke="#000"/><path d="M.5 11.500h11l6 11h2l6-11h10v16H.5z" fill="#808080" stroke="#000"/><path d="M11 0v11M25 0v11" stroke="#f03020" stroke-width="2"/></svg>
          <div class="rads"><label class="ck"><input type="radio" name="ext" checked>与沟槽角度平行</label><label class="ck"><input type="radio" name="ext">与沟槽壁边相切</label></div>
        </fieldset>
        <button class="show">显示图形(G)...</button>
      </div>
      <div class="groove">
        <label class="l r1 end off">高度: <input value="6.009063" disabled></label>
        <label class="l r2 ck"><input type="radio" name="tl" checked>半径:</label>
        <input class="l r3 yel" aria-label="左上半径" value="0.0">
        <div class="l r4 pair"><input type="radio" name="tl" aria-label="左上倒角"><button disabled>倒角(R)...</button></div>
        <label class="l r5 end" for="tal">锥度角:</label>
        <input class="l r6 yel" id="tal" value="0.0">
        <label class="l r7 ck"><input type="radio" name="bl" checked>半径:</label>
        <input class="l r8 yel" aria-label="左下半径" value="0.0">
        <div class="l r9 pair"><input type="radio" name="bl" aria-label="左下倒角"><button disabled>倒角(M)...</button></div>
        <label class="l r10 usew off"><input type="checkbox" disabled>使用刀具宽度</label>
        <label class="l r11 end off">宽度: <input value="10.418302" disabled></label>

        <svg class="pic" width="229" height="408" viewBox="858 224 229 408">
          <path d="M872.500 306.500H900c8 2 9 8 11 17l8 66 17 117c1 14 4 22 16 24.500h36c12-2 15-10 16-24.500l19-117 9-66c2-9 4-15 13-17h26v248H872.500z" fill="#808080"/>
          <path d="M900 306.500c8 2 9 8 11 17l8 66 17 117c1 14 4 22 16 24.500h36c12-2 15-10 16-24.500l19-117 9-66c2-9 4-15 13-17V300H900z" fill="#f9f9f9"/>
          <path d="M872.500 306.500H900c8 2 9 8 11 17l8 66 17 117c1 14 4 22 16 24.500h36c12-2 15-10 16-24.500l19-117 9-66c2-9 4-15 13-17h26v248H872.500z" fill="none" stroke="#000" stroke-width="1.500"/>
          <path d="M899 306.500c8 2 10 9 12 20M1046 306.500c-9 2-12 9-14 20M936 508c2 13 5 20 21 23M1006 508c-2 13-5 20-21 23" fill="none" stroke="#ff0" stroke-width="2" stroke-dasharray="8 2"/>
          <g fill="none" stroke="#e01414" stroke-width="1.200">
            <path d="M905 306h18M953 306h36M1017 306h20"/>
            <path d="M861 238h110.500v292M861 321h30l5 6 10-11M1080 321h-30l-5 6-9-11M861 423h26l5-11 13-10 14-4M1080 423h-24l-5-11-13-10-12-4"/>
            <path d="M938.500 278v10M938.500 323v254M1003.500 278v10M1003.500 323v254M968 405l-22-7M974 405l22-7M861 497.500h103.500l-20 23M1080 497.500H978l21 23M861 615h29l35-42h78"/>
          </g>
          <path d="M861 321h30M1050 321h30M861 423h26M1056 423h24M861 615h29" stroke="#d41a1a" stroke-width="2"/>
          <path d="M1080 226h-9l-61 75" fill="none" stroke="#f7f72a" stroke-width="1.500"/>
          <g fill="#f01010">
            <path d="M971.500 308l4 10h-8zM971.500 530l4-10h-8zM909 313l-3 9-6-6zM1035 313l3 9 6-6zM922 397l-11-4 2 9zM1022 397l11-4-2 9zM939 396l10-2-2 8zM1003 396l-10-2 2 8zM941 525l2-9 6 6zM1002 525l-2-9-6 6zM939 573l9-4v8zM1003 573l-9-4v8z"/>
          </g>
          <g stroke-width="1.200">
            <g stroke="#00e020" fill="#fff"><circle cx="938.500" cy="306" r="7"/><path d="M926 306h25M938.500 293v26"/><path d="M938.500 299v7h-7a7 7 0 0 1 7-7zM938.500 306h7a7 7 0 0 1-7 7z" fill="#00e020"/></g>
            <g stroke="#fff000" fill="#fff"><circle cx="1003.500" cy="306" r="7"/><path d="M991 306h25M1003.500 293v26"/><path d="M1003.500 299v7h-7a7 7 0 0 1 7-7zM1003.500 306h7a7 7 0 0 1-7 7z" fill="#fff000"/></g>
            <g stroke="#ff00ff" fill="none"><circle cx="938.500" cy="531" r="7"/><path d="M926 531h25M938.500 518v26"/><path d="M938.500 524v14a7 7 0 0 1-7-7h14a7 7 0 0 0-7-7z" fill="#ff00ff"/></g>
            <g stroke="#00f0f0" fill="none"><circle cx="1003.500" cy="531" r="7"/><path d="M991 531h25M1003.500 518v26"/><path d="M1003.500 524v14a7 7 0 0 0 7-7h-14a7 7 0 0 1 7-7z" fill="#00f0f0"/></g>
          </g>
        </svg>

        <span class="r r1 place">沟槽位置</span>
        <label class="r r2 ck flip">半径:<input type="radio" name="tr" checked></label>
        <input class="r r3 yel" aria-label="右上半径" value="0.0">
        <div class="r r4 pair"><button disabled>倒角(F)...</button><input type="radio" name="tr" aria-label="右上倒角"></div>
        <label class="r r5" for="tar">锥度角:</label>
        <input class="r r6 yel" id="tar" value="0.0">
        <label class="r r7 ck flip">半径:<input type="radio" name="br" checked></label>
        <input class="r r8 yel" aria-label="右下半径" value="0.0">
        <div class="r r9 pair"><button disabled>倒角(E)...</button><input type="radio" name="br" aria-label="右下倒角"></div>
      </div>
    </div>
  </div>
  <footer>
    <label class="ck"><input type="checkbox" checked>生成刀路</label>
    <button title="确定"><svg width="22" height="22" viewBox="0 0 22 22"><circle cx="11" cy="11" r="10" fill="#5b9a86"/><path d="M6 11l4 4 7-8" fill="none" stroke="#fff" stroke-width="3"/></svg></button>
    <button title="取消"><svg width="22" height="22" viewBox="0 0 22 22"><circle cx="11" cy="11" r="10" fill="#cf4a2b"/><path d="M7 6l8 10M15 6L7 16" stroke="#fff" stroke-width="3.500"/></svg></button>
    <button title="帮助"><svg width="22" height="22" viewBox="0 0 22 22"><circle cx="11" cy="11" r="10" fill="#4a77b4"/><path d="M7.500 9c0-5 7-5 7 0 0 2.500-3.500 2.500-3.500 5M11 15.500v2.500" fill="none" stroke="#fff" stroke-width="2.600"/></svg></button>
  </footer>
</section>

<div class="banner"><span>mastercam</span>史密斯工作室原创</div>
<svg class="pointer" width="56" height="56" viewBox="0 0 56 56"><circle cx="28" cy="28" r="27.500" fill="#8e9c3c" opacity=".55"/><path d="M28.500 28v17l4-4 3 6 2.500-1-2.500-6h5z" fill="#fff" stroke="#222"/></svg>
</body>
</html>
```
FILE: styles.css
```css
* { box-sizing: border-box; }
body {
  margin: 0; min-height: 100vh; display: flex; flex-direction: column; position: relative;
  background: #fdfdfd; color: #333; overflow: hidden;
  font: 12px/16px "Noto Sans", "Noto Sans CJK SC", sans-serif;
}
button, input, select { font: inherit; color: inherit; }
button { background: none; border: 0; padding: 0; display: flex; align-items: center; justify-content: center; white-space: nowrap; }
a { color: inherit; text-decoration: none; white-space: nowrap; }
svg { flex: none; }
.defs { position: absolute; width: 0; height: 0; }

.titlebar { height: 36px; display: flex; align-items: flex-start; }
.quick { display: flex; align-items: center; height: 30px; padding-left: 9px; }
.ib { width: 24px; height: 24px; }
.caret { margin: 0 1px; }
.vsep { width: 1px; height: 24px; background: #d0d0d0; margin: 0 4px; }
.doc { margin: 9px 0 0 64px; width: 454px; color: #444; white-space: nowrap; }
.context { width: 184px; height: 30px; padding-top: 5px; border-top: 4px solid #dcc597; background: #fbf8f1; text-align: center; color: #999; }
.wincontrols { margin-left: auto; display: flex; height: 25px; }
.wincontrols button { width: 36px; }

.menubar { height: 31px; display: flex; align-items: center; }
.menubar > a { width: 52px; text-align: center; line-height: 30px; }
.menubar > .file { width: 57px; background: #2b579a; color: #fff; margin-right: 3px; }
.menubar > .wide { width: 78px; }
.menuright { margin-left: auto; display: flex; align-items: center; gap: 7px; padding: 0 6px 3px 0; }
.combo { display: flex; align-items: center; width: 100px; height: 24px; border: 1px solid #888; background: #fff; margin-right: -4px; padding-right: 4px; }
.combo select { appearance: none; flex: 1; border: 0; background: none; padding: 0 0 0 2px; color: #111; }
.my { color: #666; padding: 5px 11px 0 0; }

.ribbon { height: 105px; display: flex; border: 1px solid #d4d4d4; background: #fdfdfd; }
.rgroup { width: 321px; padding: 7px 7px 0 8px; border-right: 1px solid #d4d4d4; display: flex; flex-direction: column; align-items: center; gap: 8px; flex: none; }
.crowd { width: 968px; align-items: stretch; }
.gallery { display: flex; height: 68px; border: 1px solid #e4e4e4; align-self: stretch; }
.big { width: 72px; flex-direction: column; justify-content: flex-start; gap: 6px; padding-top: 7px; text-align: center; }
.gscroll { display: flex; flex-direction: column; justify-content: space-around; align-items: center; flex: 1; border-left: 1px solid #e4e4e4; }
.tools { width: 147px; padding: 7px 0 0 8px; gap: 0; }
.toolrow { display: flex; height: 75px; justify-content: space-between; align-items: flex-start; align-self: stretch; }
.tools .big { width: 48px; padding-top: 0; line-height: 17px; display: block; }
.tools .big svg { display: block; margin: 0 auto 3px; }

.workspace { flex: 1; display: flex; min-height: 0; }
.paths { width: 323px; flex: none; display: flex; flex-direction: column; padding-right: 7px; border-right: 1px solid #e8e8e8; }
.phead { display: flex; align-items: center; justify-content: space-between; height: 40px; padding: 0 4px; }
h2 { font-size: 21px; line-height: 28px; font-weight: 400; margin: 0; color: #444; }
.pbtns { display: flex; gap: 9px; align-items: center; }
.ptabs { display: flex; height: 26px; padding-top: 3px; border-bottom: 1px solid #e4e4e4; }
.ptabs a { padding: 3px 6px 0 7px; }
.ptabs .on { border: 1px solid #999; border-bottom: 0; padding: 3px 5px 0; }
.tbar { display: flex; align-items: center; gap: 1px; height: 25px; padding-left: 1px; overflow: hidden; flex: none; opacity: .6; }
.ti { width: 22px; height: 22px; flex: none; }
.g1 { color: #6a8bb0; font-size: 13px; line-height: 22px; text-align: center; }
.tc { width: 10px; height: 8px; flex: none; }
.ts { width: 5px; height: 20px; flex: none; border-left: 1px solid #aaa; margin-left: 1px; }
.slate { color: #6b8299; }
.lit { background: #a9bfe6; }
.treebox { flex: 1; margin: 6px 1px 23px 2px; border: 1px solid #ccc; overflow: hidden; padding: 0 0 0 8px; color: #222; }
.tree, .tree ul { list-style: none; margin: 0; padding: 0; }
.tree ul { padding-left: 19px; }
.tree li { position: relative; }
.tree ul > li::before { content: ""; position: absolute; left: 4px; top: 0; bottom: 0; border-left: 1px dotted #444; }
.tree ul > li:last-child::before { bottom: auto; height: 9px; }
.node { display: flex; align-items: center; height: 17px; white-space: nowrap; position: relative; font-family: Roboto, "Noto Sans CJK SC", sans-serif; }
.node b { width: 9px; height: 9px; border: 1px solid #888; background: linear-gradient(#445, #445) center / 5px 1px no-repeat #fff; flex: none; }
.node s { width: 6px; height: 1px; border-top: 1px dotted #444; flex: none; }
.leaf s { margin-left: 4px; width: 11px; }
.node svg { width: 16px; height: 16px; margin: 0 5px 0 0; }
.node.dim { color: #555; }
.node span { color: #222; }

.viewport { flex: 1; position: relative; min-width: 0; background: linear-gradient(#d8d8d8, #e6e6e6 45%, #f8f8f8 75%, #fff); }
.scene { display: block; position: absolute; inset: 0; }
.axis { font: 700 13px "Noto Sans", sans-serif; }
.viewname { font: 700 13px "Noto Sans CJK SC", sans-serif; fill: #000; }
.mark { opacity: .6; }
.cn { font: 24px "Noto Sans CJK SC", sans-serif; fill: #b4b4b4; stroke: #929292; stroke-width: 1px; paint-order: stroke; }
.en { font: 22px "Liberation Serif", serif; fill: #9c9c9c; }
.scale { position: absolute; right: 24px; bottom: 10px; width: 97px; height: 26px; border: solid #000; border-width: 0 1px; background: linear-gradient(#000, #000) 0 13px / 100% 1px no-repeat; color: #000; font-weight: 700; text-align: center; line-height: 14px; display: flex; flex-direction: column; }
.masks { position: absolute; right: 6px; top: 98px; height: 677px; display: flex; flex-direction: column; justify-content: space-between; }
.masks button { width: 36px; height: 36px; border: 1px solid #b9b9b9; border-radius: 50%; background: linear-gradient(135deg, transparent 49%, #bbb 50%, transparent 51%), rgba(245, 245, 245, .5); opacity: .5; }
.masks svg { width: 36px; height: 36px; }

.levels { width: 323px; flex: none; padding: 0 10px 0 17px; display: flex; flex-direction: column; background: #fdfdfd; border-left: 3px solid #fff; }
.levels .phead { margin: 0 -8px 0 -14px; height: 40px; }
.ltools { display: flex; align-items: center; gap: 6px; height: 28px; margin-left: -9px; }
.ltools svg { width: 16px; height: 16px; }
.ltools .tiny { width: 7px; height: 7px; margin: 0 -1px; }
.lgrid { border: 1px solid #ccc; height: 573px; margin-left: -3px; display: flex; flex-direction: column; padding: 2px 1px 1px; flex: none; }
table { border-collapse: collapse; table-layout: fixed; width: 100%; flex: 1; height: 549px; }
.c1 { width: 56px; } .c2 { width: 48px; } .c3 { width: 98px; } .c4 { width: 59px; }
th { font-weight: 400; text-align: left; height: 24px; padding: 0 0 0 3px; border-right: 1px solid #e0e0e0; border-bottom: 1px solid #e8e8e8; white-space: nowrap; }
th svg { margin: 0 0 0 14px; }
td { height: 18px; padding: 0 0 0 5px; border-right: 1px solid #e8e8e8; border-bottom: 1px solid #ececec; font-size: 11px; white-space: nowrap; }
td svg { vertical-align: -2px; margin: 0 4px 0 1px; }
.blank td { height: auto; background: repeating-linear-gradient(transparent 0 17px, #efefef 17px 18px); }
.hscroll { height: 18px; display: flex; background: #f0f0f0; }
.hscroll button { width: 16px; border: 1px solid #ccc; background: #fff; }
.thumb { flex: 1; border: 1px solid #ccc; background: #fff; margin-right: 27px; }
.lform { display: grid; grid-template-columns: 106px 1fr; row-gap: 10px; padding: 7px 13px 0 3px; line-height: 18px; }
.lform > input { height: 24px; width: 100%; border: 1px solid #ccc; padding: 0 4px; background: #fff; }
.lform > .num { width: 71px; background: #ffff80; }
.opts { display: flex; flex-direction: column; gap: 2px; padding-top: 3px; }
.opts label { display: flex; align-items: center; gap: 3px; height: 18px; }
.opts input[type=radio] { border: 1px solid #999; width: 12px; height: 12px; }
.opts input[type=radio]:checked { border: 1px solid #777; background: radial-gradient(#333 0 3px, #fff 4px); }
.range { display: flex; gap: 24px; padding-left: 15px; }
.range input { width: 60px; height: 24px; border: 1px solid #aaa; background: #f0f0f0; color: #888; padding: 0 4px; }

.status { height: 32px; background: #2b579a; border-bottom: 4px solid #0e2a38; color: #e4ecf6; display: flex; align-items: center; padding-left: 820px; white-space: nowrap; }
.s1 { width: 98px; } .s2 { width: 148px; } .s3 { width: 24px; } .s4 { width: 82px; } .s5 { width: 46px; } .s6 { width: 28px; }
.status i { width: 5px; height: 4px; margin: 0 8px; background: #5578ab; clip-path: polygon(0 0, 100% 0, 50% 100%); flex: none; }
.shade { margin-left: auto; display: flex; height: 28px; }
.shade button { width: 28px; }
.shade svg { width: 16px; height: 16px; }
.shade .on { background: #0a5fd0; }

.dialog { position: absolute; left: 410px; top: 21px; width: 889px; height: 875px; border: 1px solid #b5b5b5; border-radius: 9px; background: #f0f0f0; display: flex; flex-direction: column; overflow: hidden; box-shadow: 0 10px 34px rgba(0, 0, 0, .38); color: #111; }
.dialog > header { height: 31px; background: #fdfdfd; display: flex; align-items: center; gap: 3px; padding: 0 7px 2px 8px; color: #888; flex: none; }
.dialog > header button { margin-left: auto; }
.v23 { font: italic 700 7px/8px "Noto Sans", sans-serif; fill: #222; }
.dtabs { display: flex; height: 36px; padding: 10px 0 0 8px; align-items: flex-end; }
.dtabs a { height: 22px; line-height: 20px; padding: 0 6px; border-right: 1px solid #e4e4e4; background: #f4f4f4; }
.dtabs a + a:not(.on) { padding: 0 5px; }
.dtabs .on { height: 25px; background: #f9f9f9; }
.dbody { flex: 1; margin: 0 10px 0 7px; border: 1px solid #e5e5e5; background: #f9f9f9; display: flex; }
.dialog > footer { height: 48px; display: flex; align-items: center; justify-content: flex-end; gap: 7px; padding: 8px 12px 0 0; flex: none; margin-top: 1px; }
.dialog > footer .ck { margin-right: 29px; }
.dialog > footer button { width: 60px; height: 37px; border: 1px solid #d6d6d6; border-radius: 4px; background: #fdfdfd; }

.ck { display: flex; align-items: center; gap: 4px; white-space: nowrap; }
input[type=radio], input[type=checkbox] { appearance: none; width: 13px; height: 13px; margin: 0; flex: none; border: 1px solid #868686; background: #f6f6f6; }
input[type=radio] { border-radius: 50%; }
input[type=checkbox] { border-radius: 3px; border-color: #b4b4b4; position: relative; }
input[type=radio]:checked { border: 4px solid #0c5cae; background: #fff; }
input[type=checkbox]:checked { background: #0c5cae; border-color: #0c5cae; }
input[type=checkbox]:checked::after { content: ""; position: absolute; left: 3px; top: 2px; width: 6px; height: 3px; border: solid #cfe2f5; border-width: 0 0 1px 1px; transform: rotate(-45deg); }
fieldset { border: 1px solid #dedede; margin: 0; padding: 0; min-width: 0; }
legend { padding: 0 4px; }
.dbody button { height: 29px; border: 1px solid #d0d0d0; border-radius: 4px; background: #fdfdfd; }
.dbody button:disabled, .off { color: #999; }
.dbody button:disabled { border-color: #e6e6e6; background: #f9f9f9; }
.dbody input:not([type]) { height: 30px; border: 1px solid #eee; border-bottom-color: #888; background: #fff; padding: 0 3px 6px; }
.dbody input:disabled:not([type]) { background: #f9f9f9; border-color: #ececec; color: #888; }
.dbody input.yel:not([type]) { background: #ffff80; }

.left { width: 277px; margin-left: 17px; padding-top: 24px; }
.outer { margin: 0 0 13px 98px; }
.angle { height: 306px; display: flex; gap: 10px; padding: 9px 12px 0 16px; }
.angle legend { margin-left: -12px; }
.dialcol { display: flex; flex-direction: column; gap: 12px; align-items: flex-end; }
.dial { border: 3px solid #fff; box-shadow: 1px 1px 0 #777; width: 149px; height: 175px; }
.rot { display: flex; align-items: center; gap: 6px; padding-right: 4px; }
.rot input { width: 33px; }
.btncol { display: flex; flex-direction: column; gap: 7px; width: 90px; margin-top: -4px; }
.btncol input { width: 68px; margin: 1px 0 3px; }
.corner { height: 175px; margin-top: 12px; padding: 9px 15px 0 42px; display: flex; flex-direction: column; gap: 7px; }
.corner legend { margin-left: -38px; }
.right { margin-left: 9px; padding-top: 12px; }
.toprow { display: flex; align-items: flex-start; gap: 11px; padding-left: 66px; }
.extend { width: 257px; height: 87px; display: flex; gap: 14px; padding: 12px 0 0 14px; }
.extend legend { margin-left: -10px; }
.extend svg { margin-top: 4px; }
.rads { display: flex; flex-direction: column; gap: 13px; }
.show { width: 142px; margin-top: 33px; }
.groove { display: grid; grid-template-columns: 136px 229px 104px; grid-template-rows: 57px 27px 38px 41px 25px 44px 29px 38px 52px 27px 30px; align-items: start; line-height: 20px; margin-top: 35px; }
.l { grid-column: 1; justify-self: end; }
.r { grid-column: 3; justify-self: start; }
.pic { grid-column: 2; grid-row: 1 / 12; }
.r1 { grid-row: 1; } .r2 { grid-row: 2; } .r3 { grid-row: 3; } .r4 { grid-row: 4; } .r5 { grid-row: 5; } .r6 { grid-row: 6; }
.r7 { grid-row: 7; } .r8 { grid-row: 8; } .r9 { grid-row: 9; } .r10 { grid-row: 10; } .r11 { grid-row: 11; }
.end { display: flex; align-items: center; gap: 6px; }
.place { line-height: 12px; }
.groove input:not([type]) { width: 70px; padding-bottom: 10px; }
.groove .r:not([type]) { min-width: 78px; }
.l.ck { width: 92px; }
.r.flip { width: 102px; justify-content: flex-end; }
.pair { display: flex; align-items: center; width: 92px; justify-content: space-between; }
.pair button { width: 68px; }
.r.pair { width: 102px; }
.r.pair button { width: 80px; }
.usew { width: 136px; display: flex; align-items: center; gap: 24px; color: #777; }

.banner { position: absolute; left: 774px; top: 2px; display: flex; align-items: baseline; color: #6fa5d8; font: 500 30px/36px "Noto Sans CJK SC", sans-serif; white-space: nowrap; opacity: .9; text-shadow: 0 0 2px #fff; pointer-events: none; }
.banner span { font: 700 22px/36px "Liberation Mono", monospace; }
.pointer { position: absolute; left: 832px; top: 144px; }
```
